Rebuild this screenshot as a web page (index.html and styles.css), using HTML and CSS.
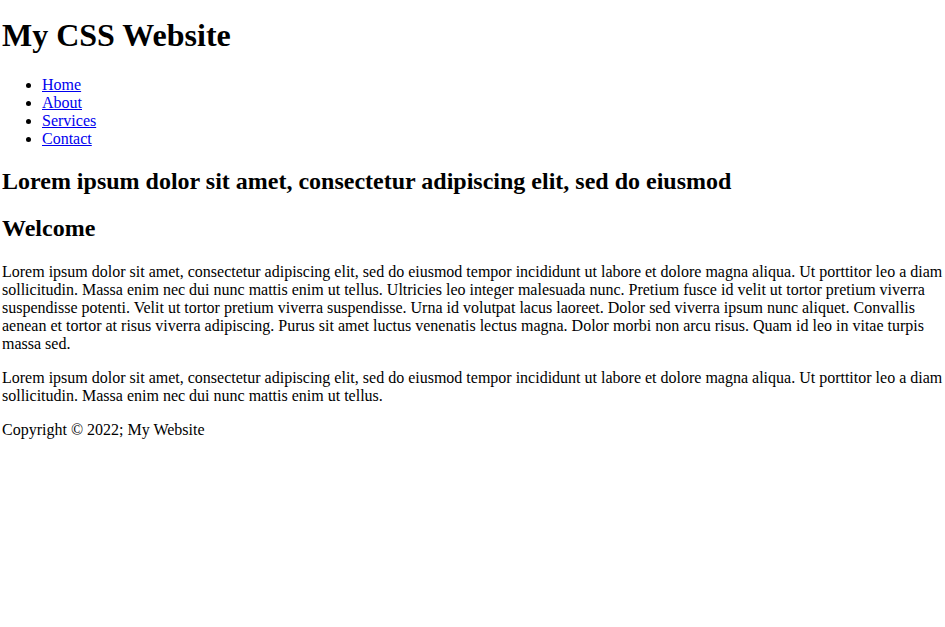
FILE: index.html
```html
<!DOCTYPE html>
<html lang="en">
<head>
<meta charset="utf-8">
<title>My CSS Website</title>
<link rel="stylesheet" href="styles.css">
</head>
<body>
<header class="site-header">
  <h1 class="site-title">My CSS Website</h1>
  <nav class="site-nav">
    <ul class="nav-list">
      <li><a href="#">Home</a></li>
      <li><a href="#">About</a></li>
      <li><a href="#">Services</a></li>
      <li><a href="#">Contact</a></li>
    </ul>
  </nav>
</header>
<main class="content">
  <h2 class="tagline">Lorem ipsum dolor sit amet, consectetur adipiscing elit, sed do eiusmod</h2>
  <section class="welcome">
    <h2 class="section-title">Welcome</h2>
    <p class="text">Lorem ipsum dolor sit amet, consectetur adipiscing elit, sed do eiusmod tempor incididunt ut labore et dolore magna aliqua. Ut porttitor leo a diam sollicitudin. Massa enim nec dui nunc mattis enim ut tellus. Ultricies leo integer malesuada nunc. Pretium fusce id velit ut tortor pretium viverra suspendisse potenti. Velit ut tortor pretium viverra suspendisse. Urna id volutpat lacus laoreet. Dolor sed viverra ipsum nunc aliquet. Convallis aenean et tortor at risus viverra adipiscing. Purus sit amet luctus venenatis lectus magna. Dolor morbi non arcu risus. Quam id leo in vitae turpis massa sed.</p>
    <p class="text">Lorem ipsum dolor sit amet, consectetur adipiscing elit, sed do eiusmod tempor incididunt ut labore et dolore magna aliqua. Ut porttitor leo a diam sollicitudin. Massa enim nec dui nunc mattis enim ut tellus.</p>
  </section>
</main>
<footer class="site-footer">
  <p class="copyright">Copyright &copy; 2022; My Website</p>
</footer>
</body>
</html>
```

FILE: styles.css
```css
html, body {
  background: #ffffff;
}
body {
  margin: 0 2px;
  font-family: "Liberation Serif", "Times New Roman", serif;
  font-size: 16px;
  line-height: 18px;
  color: #000;
}
.site-title {
  font-size: 32px;
  line-height: 37px;
  margin: 17px 0 22px;
}
.nav-list {
  margin: 0 0 14px;
  padding-left: 40px;
}
.nav-list a {
  color: #0000ee;
}
.tagline, .section-title {
  font-size: 24px;
  line-height: 28px;
}
.tagline {
  margin: 19px 0;
}
.section-title {
  margin: 19px 0 21px;
}
.text {
  margin: 16px 0;
}
.copyright {
  margin: 16px 0;
}
```
